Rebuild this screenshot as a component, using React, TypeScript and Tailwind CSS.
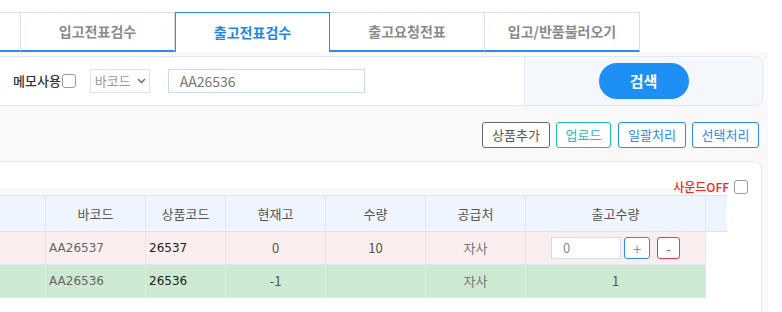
import React from 'react';

const font = { fontFamily: '"Noto Sans CJK KR", "Noto Sans", sans-serif' };

const tabs = [
  { label: '', w: 'w-[21px]', active: false },
  { label: '입고전표검수', w: 'w-[154px]', active: false },
  { label: '출고전표검수', w: 'w-[155px]', active: true },
  { label: '출고요청전표', w: 'w-[155px]', active: false },
  { label: '입고/반품불러오기', w: 'w-[155px]', active: false },
];

const cols = [
  { label: '', w: 'w-[46px]' },
  { label: '바코드', w: 'w-[100px]' },
  { label: '상품코드', w: 'w-[80px]' },
  { label: '현재고', w: 'w-[100px]' },
  { label: '수량', w: 'w-[100px]' },
  { label: '공급처', w: 'w-[100px]' },
  { label: '출고수량', w: 'w-[180px]' },
];

const rows = [
  { bg: 'bg-[#fbeeee]', barcode: 'AA26537', code: '26537', stock: '0', qty: '10', supplier: '자사', edit: true },
  { bg: 'bg-[#cde9d1]', barcode: 'AA26536', code: '26536', stock: '-1', qty: '', supplier: '자사', edit: false },
];

export default function App() {
  return (
    <div className="relative h-[312px] w-[782px] overflow-hidden bg-white text-[#333]" style={font}>
      <div className="w-[768px]">
        {/* tabs */}
        <div className="flex pt-[12px]">
          {tabs.map((t, i) =>
            t.active ? (
              <div
                key={i}
                className={`${t.w} flex h-[40px] items-center justify-center border-x border-t border-[#2a8cf0] bg-white text-[14px] font-bold text-[#1a87f0]`}
              >
                {t.label}
              </div>
            ) : (
              <div
                key={i}
                className={`${t.w} flex h-[40px] items-center justify-center border-r border-t border-b-2 border-r-[#d5e0ec] border-t-[#d5e0ec] border-b-[#2a8cf0] bg-white text-[14px] font-bold text-[#8a8a8a]`}
              >
                {t.label}
              </div>
            ),
          )}
        </div>

        <div className="bg-[#f9f9f9] pt-[4px]">
          {/* search panel */}
          <div className="mr-[5px] flex h-[50px] rounded-r-[8px] border-y border-r border-[#e4e9ef] bg-white">
            <div className="flex w-[524px] items-center">
              <span className="ml-[13px] text-[13px] font-medium text-[#333]">메모사용</span>
              <span className="ml-[1px] h-[14px] w-[14px] rounded-[3px] border border-[#9a9a9a] bg-white" />
              <div className="ml-[14px] flex h-[24px] w-[60px] items-center gap-[6px] border border-[#e3e3e3] bg-white pl-[4px] text-[13px] text-[#999]">
                <span>바코드</span>
                <svg width="9" height="6" viewBox="0 0 9 6">
                  <path d="M1 1l3.5 3.5L8 1" fill="none" stroke="#777" strokeWidth="1.6" />
                </svg>
              </div>
              <div className="ml-[18px] flex h-[24px] w-[197px] items-center border border-[#cbdaeb] bg-white pl-[11px] text-[14px] text-[#777]">
                AA26536
              </div>
            </div>
            <div className="flex flex-1 items-center justify-center rounded-r-[8px] border-l border-[#e4e9ef] bg-[#f4f8fc]">
              <button className="h-[36px] w-[90px] rounded-full bg-[#1e8ff5] text-[15px] font-bold text-white">검색</button>
            </div>
          </div>

          {/* action buttons */}
          <div className="flex h-[55px] items-center justify-end gap-[6px] pr-[9px] pt-[2px]">
            <button className="h-[26px] w-[68px] rounded-[3px] border border-[#666] bg-white text-[13px] text-[#555]">상품추가</button>
            <button className="h-[26px] w-[55px] rounded-[3px] border border-[#1fbfb8] bg-white text-[13px] text-[#1fbfb8]">업로드</button>
            <button className="ml-[1px] h-[26px] w-[68px] rounded-[3px] border border-[#2a8cf0] bg-white text-[13px] text-[#2a8cf0]">일괄처리</button>
            <button className="h-[26px] w-[67px] rounded-[3px] border border-[#2a8cf0] bg-white text-[13px] text-[#2a8cf0]">선택처리</button>
          </div>

          {/* grid card */}
          <div className="mr-[6px] h-[160px] rounded-tr-[8px] border-r border-t border-[#e2e8ef] bg-white">
            <div className="flex h-[26px] items-end justify-end pr-[13px]">
              <span className="mb-[-5px] text-[12px] font-medium leading-none text-[#ff2020]">사운드OFF</span>
              <span className="mb-[-6px] ml-[5px] h-[14px] w-[14px] rounded-[3px] border border-[#9a9a9a] bg-white" />
            </div>
            <div className="w-[727px] bg-[#f8f8f8] pt-[7px]">
              <div className="flex h-[37px] border-y border-[#dde6f0] bg-[#eef5fe] text-[13px] text-[#555]">
                {cols.map((c, i) => (
                  <div key={i} className={`${c.w} flex items-center justify-center border-r border-[#dfe7f1]`}>
                    {c.label}
                  </div>
                ))}
                <div className="flex-1" />
              </div>
            </div>
            <div className="w-[706px] text-[13px]">
              {rows.map((r, i) => (
                <div key={i} className={`flex h-[33px] border-b border-[#dfe7f1] ${r.bg}`}>
                  <div className="w-[46px] border-r border-[#dfe7f1]" />
                  <div className="flex w-[100px] items-center border-r border-[#dfe7f1] pl-[3px] text-[#666]" style={{ fontFamily: '"DejaVu Sans", sans-serif', fontSize: 12 }}>
                    {r.barcode}
                  </div>
                  <div className="flex w-[80px] items-center border-r border-[#dfe7f1] pl-[3px] text-[#222]" style={{ fontFamily: '"DejaVu Sans", sans-serif', fontSize: 12 }}>
                    {r.code}
                  </div>
                  <div className="flex w-[100px] items-center justify-center border-r border-[#dfe7f1] text-[#555]">{r.stock}</div>
                  <div className="flex w-[100px] items-center justify-center border-r border-[#dfe7f1] text-[#555]">{r.qty}</div>
                  <div className="flex w-[100px] items-center justify-center border-r border-[#dfe7f1] text-[#777]">{r.supplier}</div>
                  <div className="flex w-[180px] items-center justify-center border-r border-[#dfe7f1] text-[#555]">
                    {r.edit ? (
                      <div className="flex items-center">
                        <div className="flex h-[22px] w-[70px] items-center border border-[#d5dde8] bg-white pl-[11px] text-[#888]">0</div>
                        <button className="ml-[3px] h-[22px] w-[26px] rounded-[3px] border border-[#2a8cf0] bg-white text-[16px] font-light leading-none text-[#2a8cf0]">+</button>
                        <button className="ml-[7px] h-[22px] w-[23px] rounded-[3px] border border-[#e8365a] bg-white text-[13px] leading-none text-[#e8365a]">-</button>
                      </div>
                    ) : (
                      '1'
                    )}
                  </div>
                </div>
              ))}
            </div>
          </div>
        </div>
      </div>
    </div>
  );
}
